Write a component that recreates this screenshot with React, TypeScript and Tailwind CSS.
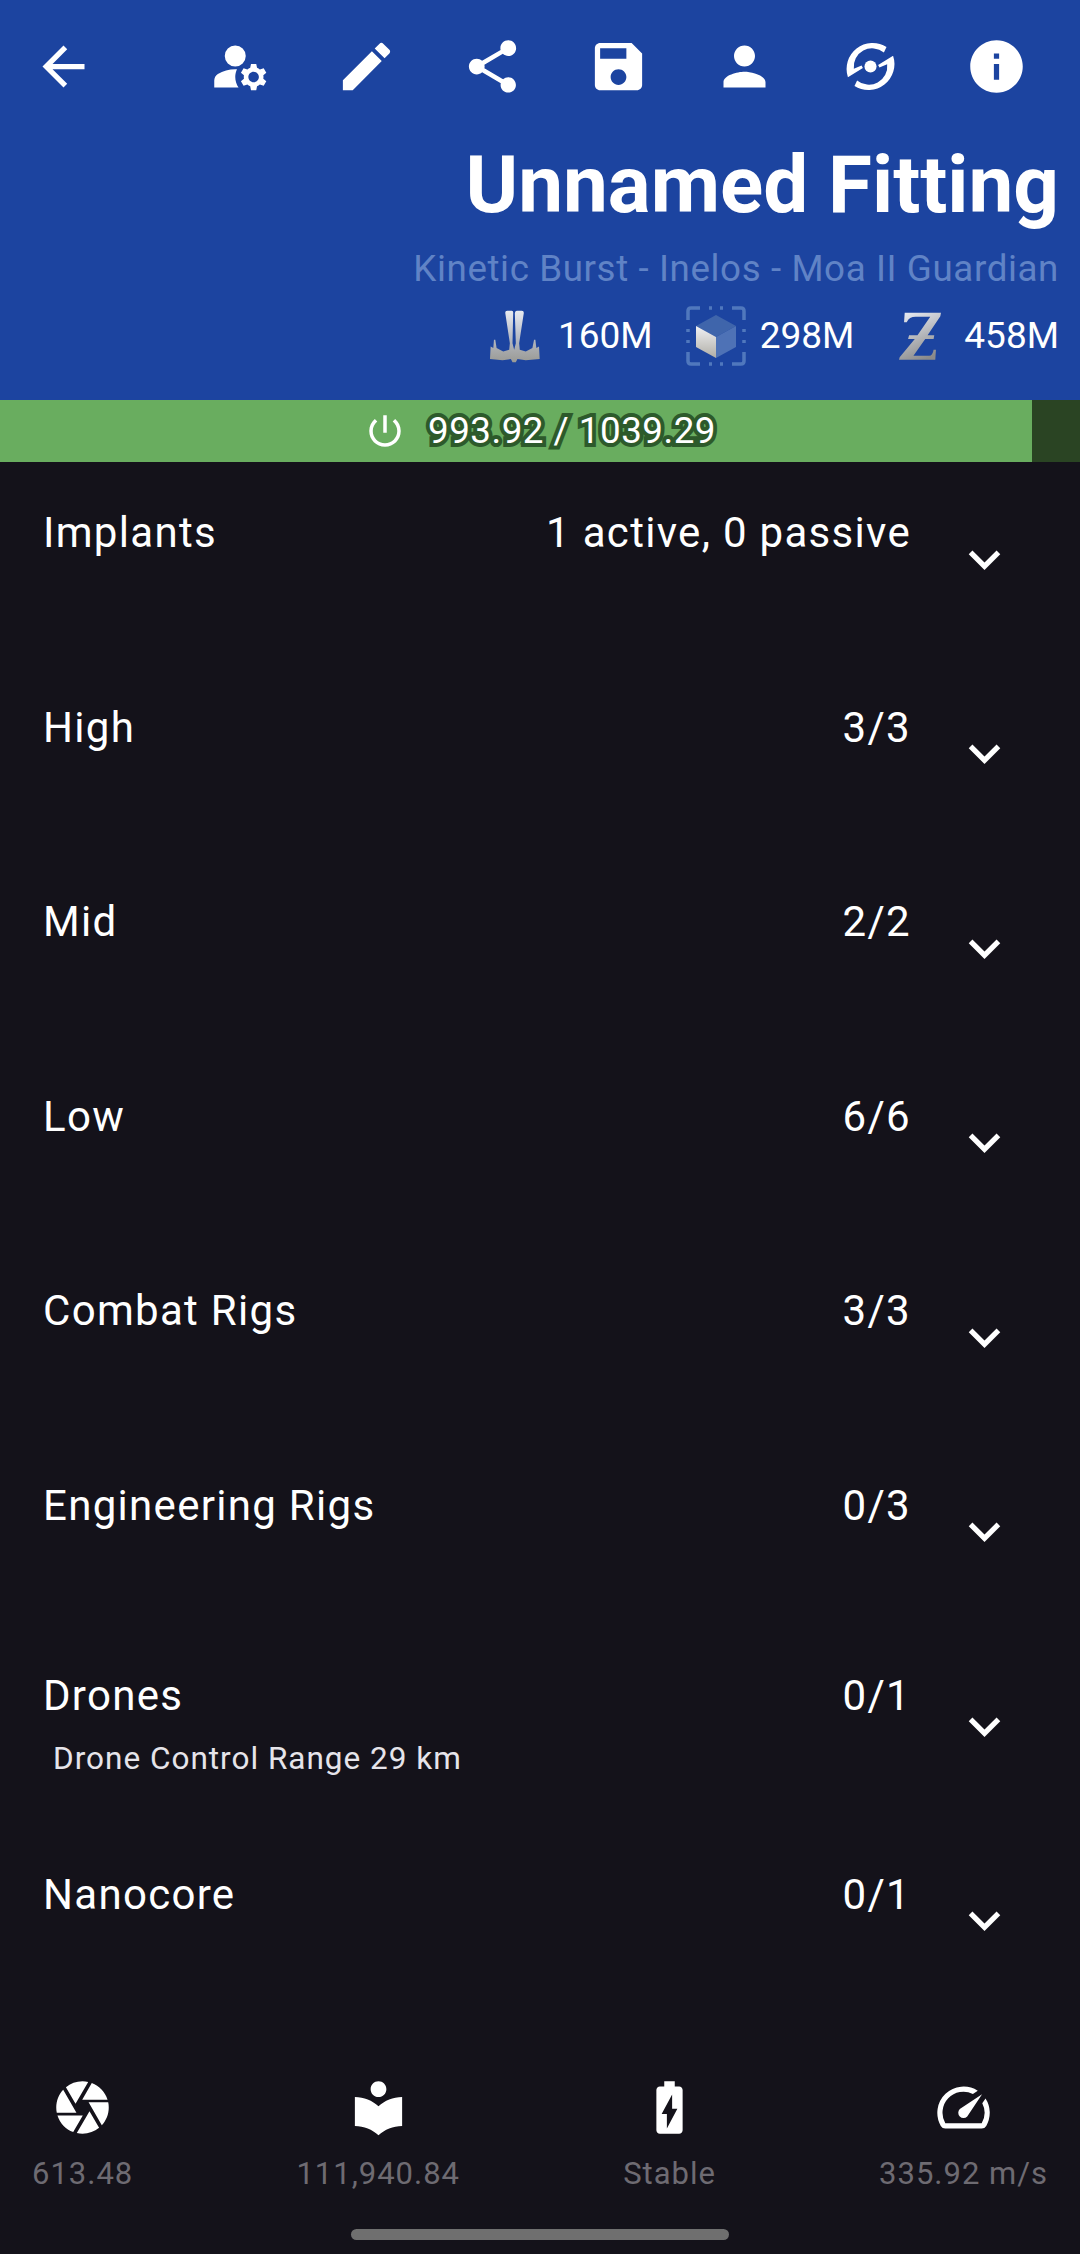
import type { ReactNode } from "react";

const ICONS = {
  back: "M20 11H7.83l5.59-5.59L12 4l-8 8 8 8 1.41-1.41L7.83 13H20v-2z",
  manage:
    "M10.67 13.02C10.45 13.01 10.23 13 10 13c-2.42 0-4.68.67-6.61 1.82C2.51 15.34 2 16.32 2 17.35V20h9.26C10.47 18.87 10 17.49 10 16c0-1.07.25-2.07.67-2.98zM10 12a4 4 0 1 0 0-8 4 4 0 0 0 0 8zM20.75 16c0-.22-.03-.42-.06-.63l1.14-1.01-1-1.73-1.45.49c-.32-.27-.68-.48-1.08-.63L18 11h-2l-.3 1.49c-.4.15-.76.36-1.08.63l-1.45-.49-1 1.73 1.14 1.01c-.03.21-.06.41-.06.63s.03.42.06.63l-1.14 1.01 1 1.73 1.45-.49c.32.27.68.48 1.08.63L16 21h2l.3-1.49c.4-.15.76-.36 1.08-.63l1.45.49 1-1.73-1.14-1.01c.03-.21.06-.41.06-.63zM17 18c-1.1 0-2-.9-2-2s.9-2 2-2 2 .9 2 2-.9 2-2 2z",
  edit: "M3 17.25V21h3.75L17.81 9.94l-3.75-3.75L3 17.25zM20.71 7.04c.39-.39.39-1.02 0-1.41l-2.34-2.34c-.39-.39-1.02-.39-1.41 0l-1.83 1.83 3.75 3.75 1.83-1.83z",
  share:
    "M18 16.08c-.76 0-1.44.3-1.96.77L8.91 12.7c.05-.23.09-.46.09-.7s-.04-.47-.09-.7l7.05-4.11c.54.5 1.25.81 2.04.81 1.66 0 3-1.34 3-3s-1.34-3-3-3-3 1.34-3 3c0 .24.04.47.09.7L8.04 9.81C7.5 9.31 6.79 9 6 9c-1.66 0-3 1.34-3 3s1.34 3 3 3c.79 0 1.5-.31 2.04-.81l7.12 4.16c-.05.21-.08.43-.08.65 0 1.61 1.31 2.92 2.92 2.92s2.92-1.31 2.92-2.92-1.31-2.92-2.92-2.92z",
  save: "M17 3H5c-1.11 0-2 .9-2 2v14c0 1.1.89 2 2 2h14c1.1 0 2-.9 2-2V7l-4-4zm-5 16c-1.66 0-3-1.34-3-3s1.34-3 3-3 3 1.34 3 3-1.34 3-3 3zm3-10H5V5h10v4z",
  person:
    "M12 12c2.21 0 4-1.79 4-4s-1.79-4-4-4-4 1.79-4 4 1.79 4 4 4zm0 2c-2.67 0-8 1.34-8 4v2h16v-2c0-2.66-5.33-4-8-4z",
  info: "M12 2C6.48 2 2 6.48 2 12s4.48 10 10 10 10-4.48 10-10S17.52 2 12 2zm1 15h-2v-6h2v6zm0-8h-2V7h2v2z",
  power:
    "M13 3h-2v10h2V3zm4.83 2.17l-1.42 1.42C17.99 7.86 19 9.81 19 12c0 3.87-3.13 7-7 7s-7-3.13-7-7c0-2.19 1.01-4.14 2.58-5.42L6.17 5.17C4.23 6.82 3 9.26 3 12c0 4.97 4.03 9 9 9s9-4.03 9-9c0-2.74-1.23-5.18-3.17-6.83z",
  expand: "M16.59 8.59L12 13.17 7.41 8.59 6 10l6 6 6-6z",
  camera:
    "M9.4 10.5l4.77-8.26C13.47 2.09 12.75 2 12 2c-2.4 0-4.6.85-6.32 2.25l3.66 6.35.06-.1zM21.54 9c-.92-2.92-3.15-5.26-6-6.34L11.88 9h9.66zm.26 1h-7.49l.29.5 4.76 8.25C21 16.97 22 14.61 22 12c0-.69-.07-1.35-.2-2zM8.54 12l-3.9-6.75C3.01 7.03 2 9.39 2 12c0 .69.07 1.35.2 2h7.49l-1.15-2zm-6.08 3c.92 2.92 3.15 5.26 6 6.34L12.12 15H2.46zm11.27 0l-3.9 6.76c.7.15 1.42.24 2.17.24 2.4 0 4.6-.85 6.32-2.25l-3.66-6.35-.93 1.6z",
  library:
    "M12 11.55C9.64 9.35 6.48 8 3 8v11c3.48 0 6.64 1.35 9 3.55 2.36-2.19 5.52-3.55 9-3.55V8c-3.48 0-6.64 1.35-9 3.55zM12 8c1.66 0 3-1.34 3-3s-1.34-3-3-3-3 1.34-3 3 1.34 3 3 3z",
  battery:
    "M15.67 4H14V2h-4v2H8.33C7.6 4 7 4.6 7 5.33v15.33C7 21.4 7.6 22 8.33 22h7.33c.74 0 1.34-.6 1.34-1.33V5.33C17 4.6 16.4 4 15.67 4zM11 20v-5.5H9L13 7v5.5h2L11 20z",
  speed:
    "M20.38 8.57l-1.23 1.85a8 8 0 0 1-.22 7.58H5.07A8 8 0 0 1 15.58 6.85l1.85-1.23A10 10 0 0 0 3.35 19a2 2 0 0 0 1.72 1h13.85a2 2 0 0 0 1.74-1 10 10 0 0 0-.27-10.44zm-9.79 6.84a2 2 0 0 0 2.83 0l5.66-8.49-8.49 5.66a2 2 0 0 0 0 2.83z",
};

function Icon({ d, className }: { d: string; className?: string }) {
  return (
    <svg viewBox="0 0 24 24" fill="currentColor" className={className}>
      <path d={d} />
    </svg>
  );
}

const SWIRL_ARM = "M18.1 4.6 A9.9 9.9 0 0 0 3.4 16.1 L9.1 12.6 L8.6 11.6 L5.65 12.9 A7 7 0 0 1 17.1 6.7 Z";

/** Two interlocked arms around a dot. */
function SwirlIcon() {
  return (
    <svg viewBox="0 0 24 24" fill="white" className="size-[63px]">
      <circle cx="12" cy="12" r="2.3" />
      <path d={SWIRL_ARM} />
      <path d={SWIRL_ARM} transform="rotate(180 12 12)" />
    </svg>
  );
}

function ShipIcon() {
  return (
    <svg viewBox="20 30 152 160" className="h-[53px] w-[51px]">
      <defs>
        <linearGradient id="ship" x1="0" y1="0" x2="0" y2="1">
          <stop offset="0" stopColor="#e8ebf1" />
          <stop offset="0.55" stopColor="#b4b8c2" />
          <stop offset="1" stopColor="#9a9a94" />
        </linearGradient>
      </defs>
      <path
        fill="url(#ship)"
        d="M68 38 Q68 32 74 32 H88 Q93 32 92 40 L90 130 L95 150 L100 130 L97 40 Q97 32 103 32 H118 Q125 32 124 40 L110 130 L112 150 L130 155 L150 145 L155 120 L159 120 L162 145 L170 140 L172 178 L130 182 L105 178 L100 188 L90 188 L85 178 L60 182 L22 178 L24 140 L32 145 L34 120 L38 120 L42 145 L62 155 L80 150 L82 130 Z"
      />
    </svg>
  );
}

function CubeIcon() {
  return (
    <svg viewBox="0 0 60 60" className="size-[60px]">
      <defs>
        <linearGradient id="cubeLeft" x1="0" y1="0" x2="0" y2="1">
          <stop offset="0" stopColor="#f0f1f4" />
          <stop offset="1" stopColor="#b0aea6" />
        </linearGradient>
      </defs>
      <g fill="none" stroke="#5078bd" strokeWidth="3.5" strokeLinejoin="round">
        <path d="M14 2 H5 Q2 2 2 5 V14" />
        <path d="M46 2 H55 Q58 2 58 5 V14" />
        <path d="M2 46 V55 Q2 58 5 58 H14" />
        <path d="M58 46 V55 Q58 58 55 58 H46" />
        <path d="M23 2 H26 M34 2 H37 M23 58 H26 M34 58 H37 M2 23 V26 M2 34 V37 M58 23 V26 M58 34 V37" />
      </g>
      <path d="M30 9 L50 20 L30 31 L10 20 Z" fill="#3f65ab" />
      <path d="M10 20 L30 31 V52 L10 41 Z" fill="url(#cubeLeft)" />
      <path d="M50 20 L30 31 V52 L50 41 Z" fill="#4e72b6" />
    </svg>
  );
}

function WarpIcon() {
  return (
    <svg viewBox="25 28 125 142" className="h-[48px] w-[42px]">
      <defs>
        <linearGradient id="warp" x1="0.2" y1="0" x2="0.6" y2="1">
          <stop offset="0" stopColor="#e4e8f0" />
          <stop offset="1" stopColor="#8a8a8a" />
        </linearGradient>
      </defs>
      <path
        fill="url(#warp)"
        d="M42 30 H150 L148 40 L110 97 H130 L128 108 H103 L68 158 H115 Q125 158 128 140 H135 L133 170 H25 L27 162 L72 108 H52 L55 97 H80 L118 42 H75 Q55 42 48 58 H40 Z"
      />
    </svg>
  );
}

function StatLabel({ children }: { children: ReactNode }) {
  return <span className="text-[37px] leading-none text-white">{children}</span>;
}

const ROWS = [
  { title: "Implants", value: "1 active, 0 passive" },
  { title: "High", value: "3/3" },
  { title: "Mid", value: "2/2" },
  { title: "Low", value: "6/6" },
  { title: "Combat Rigs", value: "3/3" },
  { title: "Engineering Rigs", value: "0/3" },
  { title: "Drones", value: "0/1", note: "Drone Control Range 29 km" },
  { title: "Nanocore", value: "0/1" },
];

const STATS = [
  { icon: ICONS.camera, label: "613.48" },
  { icon: ICONS.library, label: "111,940.84" },
  { icon: ICONS.battery, label: "Stable" },
  { icon: ICONS.speed, label: "335.92 m/s" },
];

export default function App() {
  return (
    <div className="flex h-[2254px] w-[1080px] flex-col overflow-hidden bg-[#14121a] font-['Roboto',sans-serif]">
      <header className="flex h-[400px] shrink-0 flex-col bg-[#1c44a0] pr-[21px] text-white">
        <div className="flex h-[132px] shrink-0 items-center justify-between">
          <button className="flex w-[126px] justify-center">
            <Icon d={ICONS.back} className="size-[63px]" />
          </button>
          <div className="flex">
            {[ICONS.manage, ICONS.edit, ICONS.share, ICONS.save, ICONS.person].map((d) => (
              <button key={d} className="flex w-[126px] justify-center">
                <Icon d={d} className="size-[63px]" />
              </button>
            ))}
            <button className="flex w-[126px] justify-center">
              <SwirlIcon />
            </button>
            <button className="flex w-[126px] justify-center">
              <Icon d={ICONS.info} className="size-[63px]" />
            </button>
          </div>
        </div>
        <h1 className="mt-[8px] text-right text-[80px] leading-[90px] font-bold">Unnamed Fitting</h1>
        <p className="mt-[19px] text-right text-[36.75px] leading-[40px] tracking-[0.6px] text-[#6083c6]">
          Kinetic Burst - Inelos - Moa II Guardian
        </p>
        <div className="mt-[17px] flex items-center justify-end">
          <ShipIcon />
          <span className="mr-[33px] ml-[18px]">
            <StatLabel>160M</StatLabel>
          </span>
          <CubeIcon />
          <span className="mr-[45px] ml-[14px]">
            <StatLabel>298M</StatLabel>
          </span>
          <WarpIcon />
          <span className="ml-[23px]">
            <StatLabel>458M</StatLabel>
          </span>
        </div>
      </header>

      <div className="relative flex h-[62px] shrink-0 items-center justify-center bg-[#2a4423]">
        <div className="absolute inset-y-0 left-0 w-[1032px] bg-[#69ad5f]" />
        <div className="relative flex items-center">
          <Icon d={ICONS.power} className="mr-[22px] size-[42px] text-white" />
          <span className="text-[36.75px] leading-none tracking-[0.5px] text-white [-webkit-text-stroke:8px_#2d5a2b] [paint-order:stroke_fill]">
            993.92 / 1039.29
          </span>
        </div>
      </div>

      <main className="flex-1">
        {ROWS.map((row) => (
          <div key={row.title} className="flex h-[194.5px] items-center pr-[64px] pl-[43px] text-white">
            <div className={`flex flex-1 justify-between self-start ${row.note ? "pt-[42px]" : "pt-[46px]"}`}>
              <div>
                <div className="text-[42px] leading-[50px] tracking-[1.3px]">{row.title}</div>
                {row.note && (
                  <div className="mt-[20px] pl-[10px] text-[31.5px] leading-[36px] tracking-[1px] text-[#e6e4ea]">
                    {row.note}
                  </div>
                )}
              </div>
              <div className="text-[42px] leading-[50px] tracking-[1.3px]">{row.value}</div>
            </div>
            <Icon d={ICONS.expand} className="ml-[42px] size-[63px]" />
          </div>
        ))}
      </main>

      <footer className="flex h-[178px] shrink-0 flex-col">
        <div className="flex justify-between px-[32px]">
          {STATS.map((stat) => (
            <div key={stat.label} className="flex flex-col items-center">
              <Icon d={stat.icon} className="size-[63px] text-white" />
              <span className="mt-[17px] text-[31px] leading-[36px] tracking-[1px] text-[#6e6b72]">{stat.label}</span>
            </div>
          ))}
        </div>
        <div className="mx-auto mt-[37px] h-[11px] w-[378px] rounded-full bg-[#6f6f6f]" />
      </footer>
    </div>
  );
}
